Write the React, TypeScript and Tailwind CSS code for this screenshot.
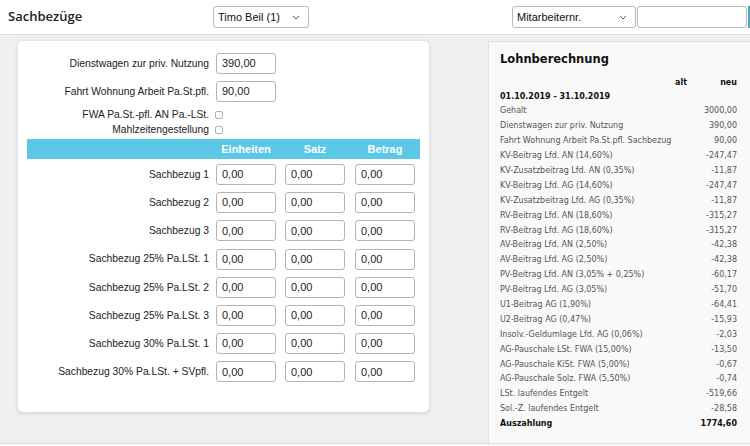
import React from "react";

const rows = [
  "Sachbezug 1",
  "Sachbezug 2",
  "Sachbezug 3",
  "Sachbezug 25% Pa.LSt. 1",
  "Sachbezug 25% Pa.LSt. 2",
  "Sachbezug 25% Pa.LSt. 3",
  "Sachbezug 30% Pa.LSt. 1",
  "Sachbezug 30% Pa.LSt. + SVpfl.",
];

const lohn: [string, string][] = [
  ["Gehalt", "3000,00"],
  ["Dienstwagen zur priv. Nutzung", "390,00"],
  ["Fahrt Wohnung Arbeit Pa.St.pfl. Sachbezug", "90,00"],
  ["KV-Beitrag Lfd. AN (14,60%)", "-247,47"],
  ["KV-Zusatzbeitrag Lfd. AN (0,35%)", "-11,87"],
  ["KV-Beitrag Lfd. AG (14,60%)", "-247,47"],
  ["KV-Zusatzbeitrag Lfd. AG (0,35%)", "-11,87"],
  ["RV-Beitrag Lfd. AN (18,60%)", "-315,27"],
  ["RV-Beitrag Lfd. AG (18,60%)", "-315,27"],
  ["AV-Beitrag Lfd. AN (2,50%)", "-42,38"],
  ["AV-Beitrag Lfd. AG (2,50%)", "-42,38"],
  ["PV-Beitrag Lfd. AN (3,05% + 0,25%)", "-60,17"],
  ["PV-Beitrag Lfd. AG (3,05%)", "-51,70"],
  ["U1-Beitrag AG (1,90%)", "-64,41"],
  ["U2-Beitrag AG (0,47%)", "-15,93"],
  ["Insolv.-Geldumlage Lfd. AG (0,06%)", "-2,03"],
  ["AG-Pauschale LSt. FWA (15,00%)", "-13,50"],
  ["AG-Pauschale KiSt. FWA (5,00%)", "-0,67"],
  ["AG-Pauschale Solz. FWA (5,50%)", "-0,74"],
  ["LSt. laufendes Entgelt", "-519,66"],
  ["Sol.-Z. laufendes Entgelt", "-28,58"],
];

function Field({ value }: { value: string }) {
  return (
    <div className="w-[60px] h-[21px] shrink-0 border border-[#b4b4b4] rounded-[3px] bg-white flex items-center pl-[5px] text-[11px] text-[#222]">
      {value}
    </div>
  );
}

function Chevron() {
  return (
    <svg width="8" height="5" viewBox="0 0 8 5" className="shrink-0">
      <path d="M1 1 L4 4 L7 1" fill="none" stroke="#555" strokeWidth="1" />
    </svg>
  );
}

export default function App() {
  return (
    <div
      className="w-[750px] h-[446px] overflow-hidden bg-[#efefef] flex flex-col"
      style={{ fontFamily: '"Liberation Sans", Arial, sans-serif' }}
    >
      {/* Header */}
      <div className="h-[35px] shrink-0 bg-white border-b border-[#dedede] flex items-center relative">
        <div
          className="pl-[8px] w-[213px] text-[13px] font-semibold text-[#222]"
          style={{ fontFamily: '"Open Sans", sans-serif' }}
        >
          Sachbezüge
        </div>
        <div className="w-[96px] h-[22px] border border-[#b8b8b8] rounded-[3px] bg-white flex items-center justify-between pl-[4px] pr-[8px] text-[11px] text-[#111]">
          <span>Timo Beil (1)</span>
          <Chevron />
        </div>
        <div className="flex-1" />
        <div className="w-[124px] h-[22px] border border-[#b8b8b8] rounded-[3px] bg-white flex items-center justify-between pl-[4px] pr-[8px] text-[11px] text-[#111]">
          <span>Mitarbeiternr.</span>
          <Chevron />
        </div>
        <div className="ml-[1px] w-[110px] h-[22px] border border-[#b8b8b8] rounded-[3px] bg-white" />
        <div className="ml-[1px] w-[2px] h-[22px] bg-[#4aa9b5]" />
      </div>

      {/* Body */}
      <div className="flex-1 flex items-start pt-[6px] min-h-0">
        {/* Left card */}
        <div className="ml-[18px] w-[411px] bg-white rounded-[5px] shadow-[0_1px_4px_rgba(0,0,0,0.15)] pt-[12px] pb-[30px] px-[9px] text-[10.3px] text-[#222]">
          <div className="flex items-center">
            <div className="w-[182px] text-right">Dienstwagen zur priv. Nutzung</div>
            <div className="ml-[7px]">
              <Field value="390,00" />
            </div>
          </div>
          <div className="flex items-center mt-[7px]">
            <div className="w-[182px] text-right">Fahrt Wohnung Arbeit Pa.St.pfl.</div>
            <div className="ml-[7px]">
              <Field value="90,00" />
            </div>
          </div>
          <div className="flex items-center mt-[6px] h-[14px]">
            <div className="w-[182px] text-right">FWA Pa.St.-pfl. AN Pa.-LSt.</div>
            <div className="ml-[6px] w-[8px] h-[8px] border border-[#b0b0b0] rounded-[2px] bg-white" />
          </div>
          <div className="flex items-center mt-[1px] h-[14px]">
            <div className="w-[182px] text-right">Mahlzeitengestellung</div>
            <div className="ml-[6px] w-[8px] h-[8px] border border-[#b0b0b0] rounded-[2px] bg-white" />
          </div>
          <div className="mt-[2px] h-[20px] bg-[#5bc8e8] flex items-center text-white font-bold text-[11px]">
            <div className="w-[189px]" />
            <div className="w-[60px] text-center">Einheiten</div>
            <div className="w-[9px]" />
            <div className="w-[60px] text-center">Satz</div>
            <div className="w-[10px]" />
            <div className="w-[60px] text-center">Betrag</div>
          </div>
          <div className="mt-[5px] flex flex-col gap-[7.2px]">
            {rows.map((r) => (
              <div key={r} className="flex items-center">
                <div className="w-[182px] text-right">{r}</div>
                <div className="ml-[7px]">
                  <Field value="0,00" />
                </div>
                <div className="ml-[9px]">
                  <Field value="0,00" />
                </div>
                <div className="ml-[10px]">
                  <Field value="0,00" />
                </div>
              </div>
            ))}
          </div>
        </div>

        {/* Right panel */}
        <div
          className="ml-[59px] flex-1 self-stretch bg-[#f9f9f9] border-l border-t border-[#e2e2e2] pl-[11px] pr-[13px] pt-[8px]"
          style={{ fontFamily: '"DejaVu Sans", Verdana, sans-serif' }}
        >
          <div className="text-[11.5px] font-bold text-[#111] leading-[18px]">Lohnberechnung</div>
          <div className="mt-[8px] flex text-[8px] font-bold text-[#111] h-[14px] items-center">
            <div className="flex-1" />
            <div className="w-[30px] text-right">alt</div>
            <div className="w-[50px] text-right">neu</div>
          </div>
          <div className="text-[8px] font-bold text-[#111] h-[14px] flex items-center">
            01.10.2019 - 31.10.2019
          </div>
          {lohn.map(([l, v]) => (
            <div key={l} className="flex items-center h-[14.9px] text-[8px] text-[#555]">
              <div className="flex-1">{l}</div>
              <div className="text-right">{v}</div>
            </div>
          ))}
          <div className="flex items-center h-[14.9px] text-[8px] font-bold text-[#111]">
            <div className="flex-1">Auszahlung</div>
            <div className="text-right">1774,60</div>
          </div>
        </div>
      </div>
      <div className="h-[3px] shrink-0 bg-[#f8f8f8] border-t border-[#dcdcdc]" />
    </div>
  );
}
